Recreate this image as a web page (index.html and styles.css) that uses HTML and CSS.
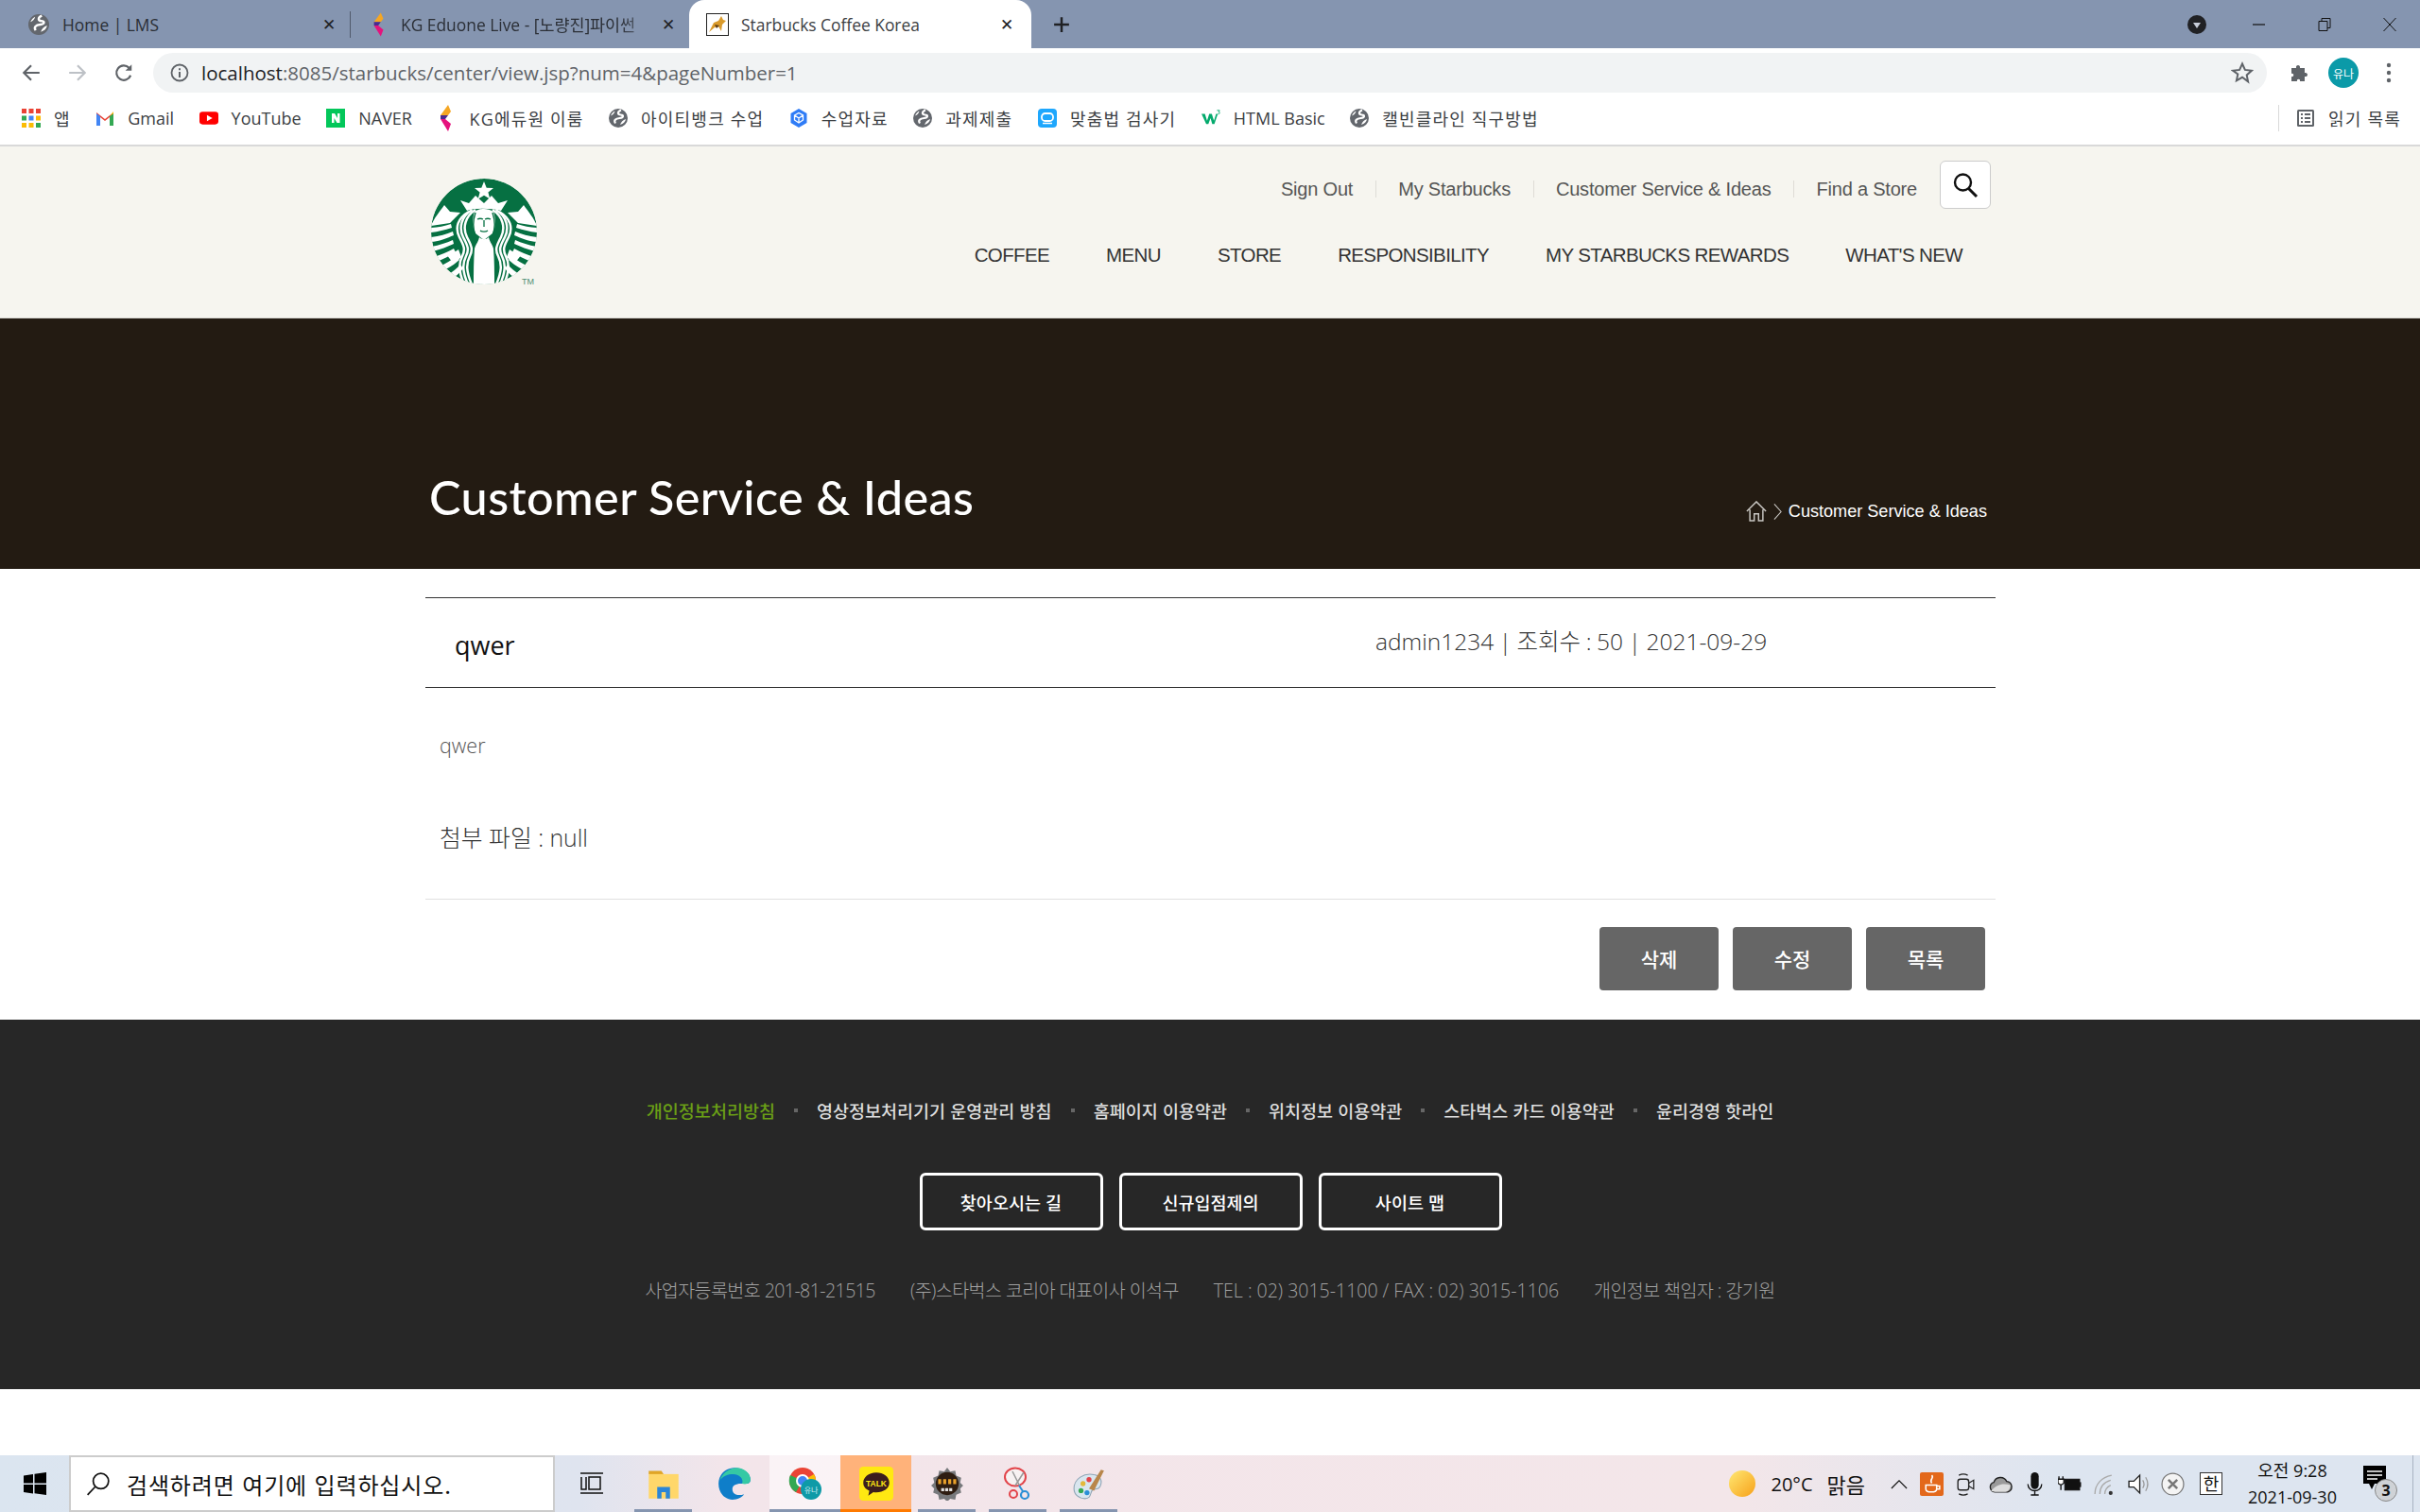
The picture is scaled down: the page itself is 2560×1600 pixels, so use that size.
FILE: index.html
```html
<!DOCTYPE html>
<html lang="ko">
<head>
<meta charset="utf-8">
<title>Starbucks Coffee Korea</title>
<link rel="stylesheet" href="styles.css">
</head>
<body>
<svg class="defs" width="0" height="0" aria-hidden="true">
  <symbol id="globe" viewBox="0 0 20 20"><circle cx="10" cy="10" r="10" fill="#63676d"/><path d="M13 1.500C9 3 9 6.500 12.500 6.500S16 9.500 11.500 10 5 12.500 7 15.500" stroke="#fff" stroke-width="2.200" fill="none"/><path d="M12 17c1-3 3-5 6-6-.5 3-2.500 5-6 6z" fill="#fff"/><path d="M2 7.500C4 7 6 5 6.500 2.500 4.500 3.500 3 5 2 7.500z" fill="#fff"/></symbol>
  <symbol id="kg" viewBox="0 0 20 28"><path d="M12 0 4 11h8l3-4z" fill="#f5a623"/><path d="M4 11h8L9 15H4z" fill="#4a2a8f"/><path d="M4 15h5l6 5-3 8z" fill="#e5127d"/></symbol>
</svg>

<div class="screen">
  <div class="tabstrip">
    <div class="tab tab-first">
      <svg class="fav"><use href="#globe"/></svg>
      <span class="tab-title">Home | LMS</span>
      <span class="tab-x">✕</span>
    </div>
    <div class="tab-sep"></div>
    <div class="tab tab-second">
      <svg class="fav-kg"><use href="#kg"/></svg>
      <span class="tab-title tab-fade">KG Eduone Live - [노량진]파이썬</span>
      <span class="tab-x">✕</span>
    </div>
    <div class="tab tab-active">
      <svg class="fav-cat" viewBox="0 0 24 24"><rect x=".5" y=".5" width="23" height="23" fill="#fff" stroke="#222"/><path d="M3 20 8 10l5-2 3-5 2 4 3 1-4 4-1 7-3-5-4 1z" fill="#d99a2b"/><path d="M9 12l5 1-3 3z" fill="#5b3a12"/></svg>
      <span class="tab-title">Starbucks Coffee Korea</span>
      <span class="tab-x">✕</span>
    </div>
    <svg class="tab-new" viewBox="0 0 16 16"><path d="M8 1v14M1 8h14" stroke="#202124" stroke-width="2.200" fill="none"/></svg>
    <div class="win">
      <svg class="win-drop" viewBox="0 0 20 20"><circle cx="10" cy="10" r="10" fill="#202124"/><path d="M6 8h8l-4 6z" fill="#c7cdd8"/></svg>
      <svg class="win-btn" viewBox="0 0 16 16"><path d="M1 8h13" stroke="#111" stroke-width="1.200"/></svg>
      <svg class="win-btn" viewBox="0 0 16 16"><path d="M2 4.500h9v10H2zM5 4.500V1.500h9v10h-3" stroke="#111" fill="none"/></svg>
      <svg class="win-btn" viewBox="0 0 16 16"><path d="M1.500 1 14.500 15M14.500 1 1.500 15" stroke="#111" fill="none"/></svg>
    </div>
  </div>

  <div class="toolbar">
    <svg class="nav-ico" viewBox="0 0 20 20"><path d="M18 10H3M10 3l-7 7 7 7" stroke="#5f6368" stroke-width="2" fill="none"/></svg>
    <svg class="nav-ico" viewBox="0 0 20 20"><path d="M2 10h15M10 3l7 7-7 7" stroke="#bdc1c6" stroke-width="2" fill="none"/></svg>
    <svg class="nav-ico" viewBox="0 0 20 20"><path d="M16.500 12.500A7 7 0 1 1 15 5.200" stroke="#5f6368" stroke-width="2" fill="none"/><path d="M17.500 2v6h-6z" fill="#5f6368"/></svg>
    <div class="omnibox">
      <svg class="info" viewBox="0 0 20 20"><circle cx="10" cy="10" r="8.500" stroke="#5f6368" stroke-width="1.800" fill="none"/><path d="M10 9v6M10 5.300v1.900" stroke="#5f6368" stroke-width="2"/></svg>
      <span class="url"><b class="host">localhost</b>:8085/starbucks/center/view.jsp?num=4&amp;pageNumber=1</span>
      <svg class="star" viewBox="0 0 24 24"><path d="M12 2.500l2.900 6.400 7 .8-5.200 4.700 1.400 6.900L12 16.800l-6.100 3.500 1.400-6.900L2.100 9.700l7-.8z" stroke="#5f6368" stroke-width="2" fill="none"/></svg>
    </div>
    <svg class="puzzle" viewBox="0 0 24 24"><path d="M4 7h5c-1-4 5-4 4 0h5v5c4-1 4 5 0 4v5h-5c1-3-4-3-3 0H4v-5c3 1 3-4 0-3z" fill="#5f6368"/></svg>
    <div class="avatar">유나</div>
    <svg class="kebab" viewBox="0 0 6 24"><circle cx="3" cy="4" r="2.200" fill="#5f6368"/><circle cx="3" cy="12" r="2.200" fill="#5f6368"/><circle cx="3" cy="20" r="2.200" fill="#5f6368"/></svg>
  </div>

  <div class="bookmarks">
    <div class="bm">
      <svg class="bm-ico" viewBox="0 0 20 20"><g fill="#ea4335"><rect width="5" height="5"/><rect x="7.500" width="5" height="5"/><rect x="15" width="5" height="5"/></g><g fill="#34a853"><rect y="7.500" width="5" height="5"/></g><g fill="#4285f4"><rect x="7.500" y="7.500" width="5" height="5"/></g><g fill="#fbbc04"><rect x="15" y="7.500" width="5" height="5"/><rect y="15" width="5" height="5"/><rect x="7.500" y="15" width="5" height="5"/></g><rect x="15" y="15" width="5" height="5" fill="#34a853"/></svg><span class="ko">앱</span></div>
    <div class="bm">
      <svg class="bm-ico" viewBox="0 0 20 20"><path d="M1 18V4l9 7 9-7v14h-4V9l-5 4-5-4v9z" fill="#ea4335"/><path d="M1 18V5l4 3v10z" fill="#4285f4"/><path d="M15 18V8l4-3v13z" fill="#34a853"/><path d="M15 8l4-3V3z" fill="#fbbc04"/></svg>Gmail</div>
    <div class="bm">
      <svg class="bm-ico" viewBox="0 0 24 20"><rect y="2" width="24" height="16" rx="4" fill="#f00"/><path d="M9.500 6v8l7-4z" fill="#fff"/></svg>YouTube</div>
    <div class="bm">
      <svg class="bm-ico" viewBox="0 0 20 20"><rect width="20" height="20" fill="#03c75a"/><path d="M6 5h3l3 5V5h2.500v10h-3l-3-5v5H6z" fill="#fff"/></svg>NAVER</div>
    <div class="bm">
      <svg class="bm-kg"><use href="#kg"/></svg><span class="ko">KG에듀원 이룸</span></div>
    <div class="bm"><svg class="bm-ico"><use href="#globe"/></svg><span class="ko">아이티뱅크 수업</span></div>
    <div class="bm">
      <svg class="bm-ico" viewBox="0 0 20 20"><path d="M10 0l8.500 5v10L10 20l-8.500-5V5z" fill="#2f7cf6"/><path d="M5.500 7 10 4.500 14.500 7v5L10 15l-4.500-3zM10 10v4M5.500 7l4.500 3 4.500-3" stroke="#fff" stroke-width="1.300" fill="none"/></svg><span class="ko">수업자료</span></div>
    <div class="bm"><svg class="bm-ico"><use href="#globe"/></svg><span class="ko">과제제출</span></div>
    <div class="bm">
      <svg class="bm-ico" viewBox="0 0 20 20"><rect width="20" height="20" rx="4" fill="#1ea7fd"/><rect x="4" y="5" width="12" height="8" rx="3.500" stroke="#fff" stroke-width="1.800" fill="none"/><path d="M5 15.500h10" stroke="#fff" stroke-width="1.500"/></svg><span class="ko">맞춤법 검사기</span></div>
    <div class="bm">
      <svg class="bm-ico" viewBox="0 0 22 20"><path d="M0 5h4l2.500 8L9 5h3l2.500 8L17 5h2l-4 12h-2.500L10.500 10 8 17H5.500z" fill="#04aa6d"/><path d="M18 1h3v.8l-1.300 1c1 0 1.500.5 1.500 1.200s-.8 1.300-2 1.300" stroke="#04aa6d" fill="none"/></svg>HTML Basic</div>
    <div class="bm"><svg class="bm-ico"><use href="#globe"/></svg><span class="ko">캘빈클라인 직구방법</span></div>
    <div class="bm-right">
      <svg class="bm-ico" viewBox="0 0 20 20"><rect x="1" y="1" width="18" height="18" rx="1.500" fill="#5f6368"/><rect x="3" y="3" width="14" height="14" fill="#fff"/><path d="M5 6h2M5 10h2M5 14h2M9 6h6M9 10h6M9 14h6" stroke="#5f6368" stroke-width="1.800"/></svg><span class="ko">읽기 목록</span></div>
  </div>

  <header class="site-header">
    <svg class="logo" viewBox="0 0 118 116" role="img" aria-label="Starbucks">
      <defs>
        <clipPath id="disc"><circle cx="56" cy="56" r="56"/></clipPath>
        <g id="strands" fill="none" stroke="#fff" stroke-width="2.500">
          <path d="M47 33C36 40 33 52 38 62 42 70 45 74 41 82 37 90 37 98 43 112"/>
          <path d="M43.500 33C32 40 29 52 34 62 38 70 41 74 37 82 33 90 33 98 39 112"/>
          <path d="M40 35C28 42 25 52 30 62 34 70 37 74 33 82 29 90 29 98 35 112"/>
        </g>
        <g id="fins" fill="#fff">
          <path d="M0 52c8-.5 14-1.500 21-4l1 4c-8 2.500-14 4-22 5zM0 62c9-1 16-3 23-6l1 4c-7 3-14 6-24 7zM0 72c9-1.500 16-4 23-7l1 4c-7 3-14 6-22 8zM3 83c8-2.500 14-5 21-9l2 4c-7 4-13 7-20 10zM9 93c7-3.500 12-6.500 18-11l3 4c-6 5-10 8-17 11zM18 102c5-3.500 9-7 13-11l3 4c-4 5-7 8-12 11z"/>
          <path d="M14 28l6 7 11 1-11 11-20 3C3 42 9 35 14 28z"/>
          <path d="M16 80c5 0 9-2 13-5l3 8c-3 3-6 5-9 6z"/>
        </g>
      </defs>
      <g clip-path="url(#disc)">
        <circle cx="56" cy="56" r="56" fill="#067042"/>
        <path d="M56 3l2.700 6.700 7.300.4-5.600 4.500 1.900 7L56 17.800l-6.300 3.800 1.900-7L46 10.100l7.300-.4z" fill="#fff"/>
        <path d="M31 23l9 3 7-8 9 8 8-8 7 8 10-3-7 11c-12-3-28-3-36 0z" fill="#fff"/>
        <use href="#fins"/>
        <use href="#fins" transform="matrix(-1 0 0 1 112 0)"/>
        <use href="#strands"/>
        <use href="#strands" transform="matrix(-1 0 0 1 112 0)"/>
        <path d="M46 35c6-4 14-4 20 0 3 9 2 18-1 23l-9 7-9-7c-3-5-4-14-1-23z" fill="#fff"/>
        <path d="M47 36c-3 9-3 17 0 24M65 36c3 9 3 17 0 24" stroke="#067042" stroke-width="1.400" fill="none"/>
        <path d="M49 43c2-1 4-1 6 0M57 43c2-1 4-1 6 0M56 44v7M52 55c2 1.500 6 1.500 8 0" stroke="#067042" stroke-width="1.300" fill="none"/>
        <path d="M51 62c3 3 7 3 10 0 1 5 4 8 5 12 1 12 1 26 1 38H45c0-12 0-26 1-38 1-4 4-7 5-12z" fill="#fff"/>
      </g>
      <text x="96" y="112" class="logo-tm">TM</text>
    </svg>
    <div class="head-right">
      <div class="util">
        <a class="util-link">Sign Out</a><i class="util-sep"></i>
        <a class="util-link">My Starbucks</a><i class="util-sep"></i>
        <a class="util-link">Customer Service &amp; Ideas</a><i class="util-sep"></i>
        <a class="util-link">Find a Store</a>
        <div class="search-btn"><svg viewBox="0 0 28 28"><circle cx="11.500" cy="11" r="8.500" stroke="#111" stroke-width="2.400" fill="none"/><path d="M17 17l9 9" stroke="#111" stroke-width="3"/></svg></div>
      </div>
      <nav class="gnb">
        <a>COFFEE</a><a>MENU</a><a>STORE</a><a>RESPONSIBILITY</a><a>MY STARBUCKS REWARDS</a><a>WHAT'S NEW</a>
      </nav>
    </div>
  </header>

  <section class="hero">
    <h1 class="hero-title">Customer Service &amp; Ideas</h1>
    <div class="crumb">
      <svg class="crumb-home" viewBox="0 0 24 24"><path d="M1 12 12 1l11 11M4.500 10v13h5v-8h5v8h5V10" stroke="#c9c7c3" stroke-width="1.600" fill="none"/></svg>
      <svg class="crumb-chev" viewBox="0 0 10 20"><path d="M1 1l8 9-8 9" stroke="#c9c7c3" stroke-width="1.200" fill="none"/></svg>
      <span>Customer Service &amp; Ideas</span>
    </div>
  </section>

  <main class="board">
    <div class="post-head">
      <h2 class="post-title">qwer</h2>
      <p class="post-meta">admin1234 | 조회수 : 50 | 2021-09-29</p>
    </div>
    <div class="post-body">
      <p class="post-text">qwer</p>
      <p class="post-file">첨부 파일 : null</p>
    </div>
    <div class="post-actions">
      <button class="btn">삭제</button>
      <button class="btn">수정</button>
      <button class="btn">목록</button>
    </div>
  </main>

  <footer class="foot">
    <ul class="foot-links">
      <li class="foot-on">개인정보처리방침</li>
      <li>영상정보처리기기 운영관리 방침</li>
      <li>홈페이지 이용약관</li>
      <li>위치정보 이용약관</li>
      <li>스타벅스 카드 이용약관</li>
      <li>윤리경영 핫라인</li>
    </ul>
    <div class="foot-btns">
      <a class="foot-btn">찾아오시는 길</a>
      <a class="foot-btn">신규입점제의</a>
      <a class="foot-btn">사이트 맵</a>
    </div>
    <div class="foot-info">
      <span class="tight">사업자등록번호 201-81-21515</span>
      <span class="tight">(주)스타벅스 코리아 대표이사 이석구</span>
      <span>TEL : 02) 3015-1100 / FAX : 02) 3015-1106</span>
      <span class="tight">개인정보 책임자 : 강기원</span>
    </div>
  </footer>

  <div class="gap"></div>

  <div class="taskbar">
    <div class="start"><svg viewBox="0 0 24 24"><path d="M0 3.500 10 2v9.500H0zM11.500 1.800 24 0v11.500H11.500zM0 13h10v9.500L0 21zM11.500 13H24v11l-12.500-1.800z" fill="#000"/></svg></div>
    <div class="tb-search">
      <svg viewBox="0 0 24 24"><circle cx="14.500" cy="9.500" r="7.500" stroke="#111" stroke-width="1.600" fill="none"/><path d="M9 15 1.500 23" stroke="#111" stroke-width="1.600"/></svg>
      <span>검색하려면 여기에 입력하십시오.</span>
    </div>
    <div class="taskview"><svg viewBox="0 0 26 24"><path d="M1 1h24M1 22h24M2 5v13h5V5M10 5h12v13H10z" stroke="#111" stroke-width="1.500" fill="none"/></svg></div>
    <div class="task task-run"><svg viewBox="0 0 32 32"><path d="M2 4h12l2 3H2z" fill="#e0a526"/><rect x="2" y="7" width="28" height="23" fill="#ffd76a"/><path d="M10 30V19h12v11h-4v-6h-4v6z" fill="#2b86d8"/></svg></div>
    <div class="task"><svg viewBox="0 0 32 32"><path d="M16 1C7 1 1 8 1 16c0 9 6 15 13 15 5 0 9-2 11-5-6 2-11 0-11-5 0-3 3-5 8-5 5 0 9 1 9-4C31 6 24 1 16 1z" fill="#0f7ec9"/><path d="M2 13C5 5 12 1 18 1c7 0 13 5 13 11 0 4-4 5-8 4 2-4-2-9-8-9C9 7 5 9 2 13z" fill="#35c9a4"/></svg></div>
    <div class="task task-open"><svg viewBox="0 0 36 36"><circle cx="15" cy="15" r="14" fill="#ea4335"/><path d="M15 15 27 8a14 14 0 0 1-6 20z" fill="#fbbc04"/><path d="M15 15 8 27A14 14 0 0 1 2 9z" fill="#34a853"/><circle cx="15" cy="15" r="6" fill="#4285f4" stroke="#fff" stroke-width="2"/><circle cx="24" cy="24" r="11" fill="#0e9aa7"/><text x="24" y="28" class="chip">유나</text></svg></div>
    <div class="task task-active"><svg viewBox="0 0 34 34"><rect width="34" height="34" rx="4" fill="#ffe812"/><path d="M17 6C9 6 4 11 4 16c0 4 2.500 6.500 6 8l-1 5 5-3.500c1 .1 2 .2 3 .2 7 0 13-4 13-9.700S24 6 17 6z" fill="#3c1e1e"/><text x="17" y="20" class="talk">TALK</text></svg></div>
    <div class="task task-run"><svg viewBox="0 0 34 34"><path d="M17 1l3 4 5-1 1 5 5 2-1 5 3 3-3 3 1 4-5 2-1 5-5-1-3 3-3-3-5 1-1-5-5-2 1-4-3-3 3-3-1-5 5-2 1-5 5 1z" fill="#77797c"/><circle cx="17" cy="17" r="11.500" fill="#2e1d12"/><path d="M8 15h18" stroke="#e8a12b" stroke-width="5" stroke-dasharray="3 2"/><path d="M11 23h12" stroke="#e0e0e0" stroke-width="3" stroke-dasharray="3 1"/></svg></div>
    <div class="task task-run"><svg viewBox="0 0 32 36"><ellipse cx="13" cy="11" rx="11" ry="9.500" fill="#f7f2f2" stroke="#e2444a" stroke-width="2"/><path d="M10 5l8 16M22 6 13 20" stroke="#999" stroke-width="1.500"/><path d="M17 20l4 6" stroke="#2a8fd6" stroke-width="2"/><circle cx="23" cy="30" r="4" stroke="#2a8fd6" stroke-width="2.200" fill="none"/><circle cx="11" cy="29" r="4" stroke="#e2444a" stroke-width="2" fill="none"/></svg></div>
    <div class="task task-run"><svg viewBox="0 0 34 34"><path d="M2 22C2 12 12 6 22 8c6 1 9 6 6 12-2 4-6 1-8 4s-1 8-7 8C7 32 2 28 2 22z" fill="#d9e6ef" stroke="#8fa5b5"/><circle cx="11" cy="17" r="2.500" fill="#e2b93b"/><circle cx="17" cy="13" r="2.500" fill="#e2444a"/><circle cx="9" cy="24" r="2.500" fill="#35a853"/><circle cx="15" cy="26" r="2.500" fill="#2a8fd6"/><path d="M17 22 29 3l3 1-10 20z" fill="#b8864a"/></svg></div>

    <div class="tray">
      <svg class="sun" viewBox="0 0 28 28"><defs><linearGradient id="sung" x1="0" y1="0" x2="1" y2="1"><stop offset="0" stop-color="#ffe873"/><stop offset="1" stop-color="#f7a11a"/></linearGradient></defs><circle cx="14" cy="14" r="14" fill="url(#sung)"/></svg>
      <span class="temp">20°C</span>
      <span class="sky">맑음</span>
      <svg class="chev" viewBox="0 0 20 12"><path d="M1 11 10 2l9 9" stroke="#111" stroke-width="1.300" fill="none"/></svg>
      <span class="ti"><svg viewBox="0 0 24 24"><rect width="24" height="24" rx="2" fill="#e3681b"/><path d="M12 3c3 3-3 4 0 8M6 13h11v4c0 2-2 3-5.500 3S6 19 6 17zM17 14h3v3h-3" stroke="#fff" stroke-width="1.500" fill="none"/></svg></span>
      <span class="ti"><svg viewBox="0 0 24 24"><rect x="4" y="7" width="11" height="11" rx="2.500" stroke="#222" stroke-width="1.300" fill="none"/><path d="M15 11l5-3v9l-5-3M5 3c3-1.500 6-1.500 9 0M5 22c3 1.500 6 1.500 9 0" stroke="#222" stroke-width="1.200" fill="none"/></svg></span>
      <span class="ti"><svg viewBox="0 0 24 24"><path d="M6 20a5 5 0 0 1-1-9.800 7 7 0 0 1 13-1 5.500 5.500 0 0 1 1 10.800z" fill="#9a9a9a" stroke="#222" stroke-width="1.300"/><path d="M2 19c6-7 12-8 20-6-1 6-4 7-6 7H6z" fill="#ddd"/></svg></span>
      <span class="ti"><svg viewBox="0 0 24 24"><rect x="8" y="0" width="8" height="17" rx="4" fill="#111"/><path d="M5 12c0 9 14 9 14 0M12 19v4M8 23h8" stroke="#111" stroke-width="1.300" fill="none"/></svg></span>
      <span class="ti"><svg viewBox="0 0 24 24"><rect x="7" y="7" width="15" height="11" fill="#111" stroke="#111"/><rect x="22" y="10" width="1.500" height="5" fill="#111"/><path d="M1 4v3M5 4v3M0 7h6v4l-3 2-3-2zM3 13v5" stroke="#111" stroke-width="1.300" fill="#fff"/></svg></span>
      <span class="ti"><svg viewBox="0 0 24 24"><path d="M3 22C3 12 10 5 20 3M8 22c0-7 4-12 11-14M13 22c0-4 2-7 6-9" stroke="#aaa" stroke-width="1.300" fill="none"/><circle cx="19" cy="21" r="2" fill="#333"/></svg></span>
      <span class="ti"><svg viewBox="0 0 24 24"><path d="M2 9h5l6-6v18l-6-6H2z" stroke="#222" stroke-width="1.300" fill="#fff"/><path d="M16 8c2 3 2 5 0 8M19 5c3 5 3 9 0 14" stroke="#999" stroke-width="1.200" fill="none"/></svg></span>
      <span class="ti"><svg viewBox="0 0 24 24"><circle cx="12" cy="12" r="11" fill="#f4f4f4" stroke="#777" stroke-width="1.200"/><path d="M7.500 7.500l9 9M16.500 7.500l-9 9" stroke="#777" stroke-width="2.400"/></svg></span>
      <span class="ime">한</span>
      <div class="clock"><span>오전 9:28</span><span>2021-09-30</span></div>
      <div class="notice"><svg viewBox="0 0 26 30"><path d="M0 0h24v19H12l-3 6-3-6H0z" fill="#000"/><path d="M4 6h16M4 10h16M4 14h11" stroke="#fff" stroke-width="1.300"/></svg><span class="badge">3</span></div>
    </div>
  </div>
</div>
</body>
</html>
```
FILE: styles.css
```css
* { box-sizing: border-box; }
html, body { margin: 0; padding: 0; background: #fff; }
.defs { display: block; height: 0; width: 0; overflow: hidden; }
.screen {
  width: 2560px; height: 1600px; display: flex; flex-direction: column; overflow: hidden;
  font-family: "Open Sans", "Noto Sans CJK KR", sans-serif; color: #222;
}

/* Browser tab strip */
.tabstrip { height: 51px; flex: none; background: #8595b0; display: flex; align-items: center; font-size: 17.400px; }
.tab { height: 51px; display: flex; align-items: center; flex: none; }
.tab-first { width: 370px; padding: 0 12px 0 30px; }
.tab-second { width: 358px; padding: 0 12px 0 21px; }
.tab-active { width: 362px; padding: 0 16px 0 18px; background: #fff; border-radius: 16px 16px 0 0; }
.tab-sep { width: 1px; height: 28px; background: #50596b; flex: none; }
.tab-title { flex: 1; white-space: nowrap; overflow: hidden; color: #2b2f36; }
.tab-active .tab-title { color: #3c4043; }
.tab-fade { -webkit-mask-image: linear-gradient(90deg, #000 85%, transparent); mask-image: linear-gradient(90deg, #000 85%, transparent); }
.tab-x { width: 20px; font-size: 17px; text-align: center; color: #202124; flex: none; font-family: "DejaVu Sans", sans-serif; }
.fav { width: 22px; height: 22px; margin-right: 14px; flex: none; }
.fav-kg { width: 18px; height: 26px; margin-right: 14px; flex: none; }
.fav-cat { width: 24px; height: 24px; margin-right: 13px; flex: none; }
.tab-new { width: 18px; height: 18px; margin-left: 23px; flex: none; }
.win { margin-left: auto; display: flex; align-items: center; padding-right: 24px; }
.win-drop { width: 20px; height: 20px; margin-right: 48px; }
.win-btn { width: 16px; height: 16px; margin-left: 53px; }
.win-drop + .win-btn { margin-left: 0; }

/* Toolbar */
.toolbar { height: 52px; flex: none; background: #fff; display: flex; align-items: center; padding-left: 22px; }
.nav-ico { width: 22px; height: 22px; margin-right: 27px; flex: none; }
.omnibox { width: 2236px; height: 42px; margin-left: -7px; background: #f1f3f4; border-radius: 21px; display: flex; align-items: center; padding: 0 14px 0 18px; flex: none; }
.info { width: 20px; height: 20px; flex: none; margin-right: 13px; }
.url { flex: 1; font-size: 20.500px; color: #5f6368; white-space: nowrap; }
.host { font-weight: 400; color: #202124; }
.star { width: 24px; height: 24px; flex: none; }
.puzzle { width: 24px; height: 24px; margin-left: 22px; flex: none; }
.avatar { width: 32px; height: 32px; margin-left: 19px; border-radius: 50%; background: #0b9aa8; color: #fff; font-size: 12px; display: flex; align-items: center; justify-content: center; flex: none; font-family: "Noto Sans CJK KR", sans-serif; }
.kebab { width: 6px; height: 24px; margin-left: 29px; flex: none; }

/* Bookmarks */
.bookmarks { height: 52px; flex: none; background: #fff; border-bottom: 2px solid #d9d9d9; display: flex; align-items: center; padding: 0 0 7px 23px; gap: 26.500px; font-size: 18px; color: #3c4043; }
.bm { display: flex; align-items: center; gap: 14px; white-space: nowrap; flex: none; }
.ko { letter-spacing: 1.200px; }
.bm-ico { width: 20px; height: 20px; flex: none; }
.bm-kg { width: 20px; height: 28px; flex: none; margin: -4px 0; }
.bm-right { margin-left: auto; margin-right: 20px; height: 28px; padding-left: 18px; border-left: 1px solid #d9d9d9; display: flex; align-items: center; gap: 14px; }

/* Site header */
.site-header { height: 182px; flex: none; background: #f6f5ef; border-bottom: 1px solid #d6d5d0; padding: 34px 454px 0 456px; display: flex; justify-content: space-between; align-items: flex-start; font-family: "Liberation Sans", Arial, sans-serif; }
.logo { width: 118px; height: 116px; flex: none; }
.logo-tm { font: 9px "Liberation Sans", sans-serif; fill: #4f8f75; }
.head-right { display: flex; flex-direction: column; align-items: flex-end; margin-top: -19px; }
.util { display: flex; align-items: center; height: 51px; font-size: 20px; letter-spacing: -0.200px; color: #555; }
.util-link { white-space: nowrap; padding-top: 9px; }
.util-sep { width: 1px; height: 18px; background: #dedcd6; margin: 9px 23px 0 24px; }
.search-btn { width: 54px; height: 51px; margin-left: 24px; background: #fff; border: 1px solid #ccc; border-radius: 6px; display: flex; align-items: center; justify-content: center; }
.search-btn svg { width: 28px; height: 28px; }
.gnb { display: flex; gap: 60px; margin-top: 37px; margin-right: 30px; font-size: 20.500px; letter-spacing: -0.620px; color: #333; white-space: nowrap; }

/* Hero */
.hero { height: 265px; flex: none; background: #231b12; padding: 0 458px 0 454px; display: flex; justify-content: space-between; align-items: flex-end; color: #fff; }
.hero-title { margin: 0 0 46px; font: 500 50.400px/60px Lato, sans-serif; letter-spacing: .4px; }
.crumb { display: flex; align-items: center; margin-bottom: 50px; font: 18.100px "Liberation Sans", sans-serif; }
.crumb-home { width: 22px; height: 22px; margin-right: 7px; }
.crumb-chev { width: 9px; height: 19px; margin-right: 7px; }

/* Board */
.board { height: 477px; flex: none; background: #fff; padding: 30px 449px 0 450px; display: flex; flex-direction: column; }
.post-head { height: 96px; border-top: 1px solid #333; border-bottom: 1px solid #333; display: flex; padding-left: 31px; flex: none; }
.post-title { margin: 32px 0 0; width: 974px; font-size: 27px; line-height: 36px; font-weight: 400; color: #111; flex: none; font-family: "Open Sans", "Noto Sans CJK KR", sans-serif; }
.post-meta { margin: 29px 0 0; font-size: 24.500px; line-height: 34px; font-weight: 300; color: #333; white-space: nowrap; word-spacing: -0.800px; }
.post-body { height: 224px; border-bottom: 1px solid #e0e0e0; padding: 0 15px; flex: none; }
.post-text { margin: 47px 0 0; font-size: 21.500px; line-height: 28px; font-weight: 300; color: #555; }
.post-file { margin: 66px 0 0; font-size: 24.800px; line-height: 34px; font-weight: 300; color: #333; }
.post-actions { display: flex; justify-content: flex-end; gap: 15px; padding: 29px 11px 0 0; }
.btn { width: 126px; height: 67px; border: 0; border-radius: 4px; background: #666; color: #fff; font: 500 21px "Noto Sans CJK KR", sans-serif; padding: 0 0 2px; }

/* Footer */
.foot { height: 391px; flex: none; background: #272727; display: flex; flex-direction: column; align-items: center; padding-top: 81px; }
.foot-links { list-style: none; margin: 0; padding: 0; display: flex; font: 500 18.500px/30px "Noto Sans CJK KR", sans-serif; color: #ddd; white-space: nowrap; }
.foot-links li { display: flex; align-items: center; }
.foot-links li + li::before { content: ""; width: 4px; height: 4px; background: #666; margin: 0 20px; }
.foot-on { color: #6a9f16; }
.foot-btns { display: flex; gap: 17px; margin-top: 51px; margin-left: 1px; }
.foot-btn { width: 194px; height: 61px; border: 3px solid #fff; border-radius: 6px; display: flex; align-items: center; justify-content: center; color: #fff; font: 500 18.500px "Noto Sans CJK KR", sans-serif; }
.foot-info { display: flex; gap: 37px; margin-top: 47px; font: 300 19.500px/34px "Open Sans", "Noto Sans CJK KR", sans-serif; color: #a2a2a2; white-space: nowrap; }
.tight { letter-spacing: -0.550px; }

.gap { height: 70px; flex: none; background: #fff; }

/* Windows taskbar */
.taskbar { height: 60px; flex: none; display: flex; align-items: stretch; padding-right: 7px; background: linear-gradient(90deg, #dbe5f0 0, #dfe4ef 24%, #f3e5ea 30%, #f3e6e9 72%, #dde5f0 85%, #dde5f0 100%); font-family: "Noto Sans CJK KR", sans-serif; color: #111; }
.start { width: 73px; display: flex; align-items: center; justify-content: center; flex: none; }
.start svg { width: 24px; height: 24px; }
.tb-search { width: 514px; background: #fff; border: 2px solid #ccc; display: flex; align-items: center; padding-left: 16px; font-size: 24px; letter-spacing: .850px; flex: none; white-space: nowrap; }
.tb-search svg { width: 26px; height: 26px; margin-right: 17px; flex: none; }
.taskview { width: 77px; display: flex; align-items: center; justify-content: center; flex: none; }
.taskview svg { width: 26px; height: 24px; }
.task { width: 75px; position: relative; display: flex; align-items: center; justify-content: center; flex: none; }
.task svg { width: 36px; height: 36px; }
.task-run::after { content: ""; position: absolute; bottom: 0; left: 7px; right: 7px; height: 3px; background: #8595b0; }
.task-open { background: rgba(255, 255, 255, .55); }
.task-open::after { content: ""; position: absolute; bottom: 0; left: 0; right: 0; height: 3px; background: #8595b0; }
.task-active { background: #ffb27a; }
.task-active::after { content: ""; position: absolute; bottom: 0; left: 0; right: 0; height: 3px; background: #ff7a00; }
.chip { font: 8px "Noto Sans CJK KR", sans-serif; fill: #cfeff2; text-anchor: middle; }
.talk { font: 700 8px "Liberation Sans", sans-serif; fill: #ffe812; text-anchor: middle; }
.tray { margin-left: auto; display: flex; align-items: center; padding-right: 18px; border-right: 1px solid #a9b3c2; flex: none; }
.sun { width: 28px; height: 28px; margin-right: 16px; }
.temp { font-size: 20px; margin-right: 15px; font-family: "Open Sans", sans-serif; }
.sky { font-size: 22px; margin-right: 27px; }
.chev { width: 18px; height: 11px; margin-right: 7px; }
.ti { width: 36.500px; display: flex; justify-content: center; flex: none; }
.ti svg { width: 25px; height: 25px; }
.ime { width: 24px; height: 24px; margin-left: 10px; border: 1px solid #333; background: #fff; font-size: 18px; line-height: 20px; text-align: center; flex: none; }
.clock { width: 112px; margin-left: 18px; display: flex; flex-direction: column; align-items: center; font-size: 18px; line-height: 28px; font-family: "Open Sans", "Noto Sans CJK KR", sans-serif; flex: none; }
.notice { width: 34px; height: 38px; margin-left: 19px; position: relative; flex: none; }
.notice svg { width: 26px; height: 30px; }
.badge { position: absolute; right: -2px; bottom: 0; width: 24px; height: 24px; border-radius: 50%; background: #cfd2d6; border: 1px solid #888; font: 700 16px/22px "Open Sans", sans-serif; text-align: center; color: #111; }
```
